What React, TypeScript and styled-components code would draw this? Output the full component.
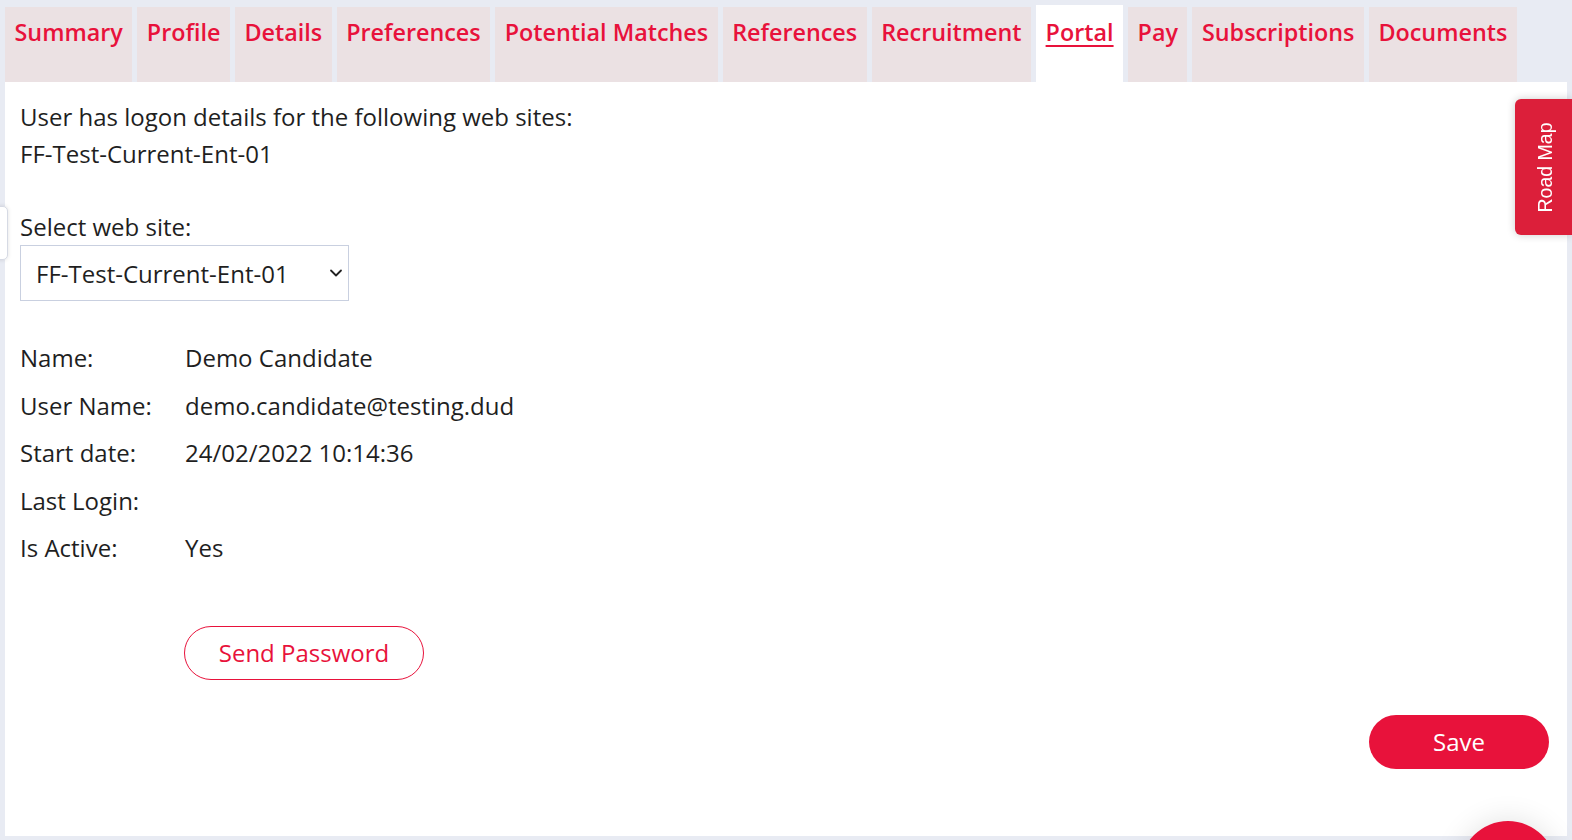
import React from "react";
import styled, { createGlobalStyle } from "styled-components";

const RED = "#e8123b";

const Global = createGlobalStyle`
  html, body { margin: 0; padding: 0; }
  body {
    background: #e8ebf3;
    font-family: "Open Sans", "Noto Sans", sans-serif;
    color: #1f1f1f;
    overflow: hidden;
  }
`;

const Page = styled.div`
  width: 1572px;
  height: 840px;
  box-sizing: border-box;
  padding: 5px 5px 4px 5px;
  display: flex;
  flex-direction: column;
`;

const TabBar = styled.nav`
  display: flex;
  align-items: flex-end;
  gap: 5px;
  height: 77px;
`;

const Tab = styled.a<{ $active?: boolean }>`
  display: block;
  box-sizing: border-box;
  height: ${(p) => (p.$active ? "77px" : "75px")};
  padding: ${(p) => (p.$active ? "12px 9.5px 0" : "10px 9.5px 0")};
  background: ${(p) => (p.$active ? "#ffffff" : "#ebe1e3")};
  color: ${RED};
  font-size: 23.35px;
  font-weight: 600;
  line-height: 30px;
  text-decoration: ${(p) => (p.$active ? "underline" : "none")};
  text-underline-offset: 4px;
  text-decoration-thickness: 2px;
  white-space: nowrap;
  cursor: pointer;
`;

const Panel = styled.main`
  flex: 1;
  background: #ffffff;
  padding: 16px 15px 0;
  font-size: 24px;
  line-height: 37px;
`;

const Line = styled.div``;

const FieldLabel = styled.div`
  margin-top: 36px;
  line-height: 37px;
`;

const SelectWrap = styled.div`
  position: relative;
  width: 329px;
  height: 56px;
`;

const Select = styled.select`
  appearance: none;
  width: 100%;
  height: 100%;
  box-sizing: border-box;
  border: 1px solid #c9d0e0;
  border-radius: 0;
  background: #fff;
  padding: 0 40px 0 15px;
  font-family: "Open Sans", "Noto Sans", sans-serif;
  font-size: 24px;
  color: #1f1f1f;
  outline: none;
`;

const Chevron = styled.svg`
  position: absolute;
  right: 5px;
  top: 21px;
  pointer-events: none;
`;

const DetailGrid = styled.dl`
  display: grid;
  grid-template-columns: 165px auto;
  grid-auto-rows: 47.5px;
  align-items: center;
  margin: 33px 0 0;
`;

const Term = styled.dt`
  margin: 0;
`;

const Def = styled.dd`
  margin: 0;
`;

const OutlineButton = styled.button`
  margin: 54px 0 0 164px;
  width: 240px;
  height: 54px;
  border: 1px solid ${RED};
  border-radius: 27px;
  background: #fff;
  color: ${RED};
  font-family: "Open Sans", "Noto Sans", sans-serif;
  font-size: 24px;
  cursor: pointer;
`;

const Footer = styled.div`
  display: flex;
  justify-content: flex-end;
  padding-right: 3px;
  margin-top: 35px;
`;

const SaveButton = styled.button`
  width: 180px;
  height: 54px;
  border: none;
  border-radius: 27px;
  background: ${RED};
  color: #fff;
  font-family: "Open Sans", "Noto Sans", sans-serif;
  font-size: 24px;
  cursor: pointer;
`;

const RoadMap = styled.div`
  position: fixed;
  top: 99px;
  right: 0;
  width: 57px;
  height: 136px;
  background: #dc1f3a;
  border-radius: 6px 0 0 6px;
  box-shadow: 0 0 8px rgba(0, 0, 0, 0.2);
  display: flex;
  align-items: center;
  justify-content: center;
`;

const RoadMapText = styled.span`
  display: block;
  transform: rotate(-90deg);
  color: #fff;
  font-family: "Liberation Sans", Arial, sans-serif;
  font-size: 19.5px;
  white-space: nowrap;
  margin-left: 4px;
`;

const SideHandle = styled.div`
  position: fixed;
  left: -6px;
  top: 206px;
  width: 12px;
  height: 52px;
  background: #fff;
  border: 1px solid #d6dae4;
  border-radius: 5px;
  box-shadow: 0 0 4px rgba(0, 0, 0, 0.12);
`;

const Fab = styled.div`
  position: fixed;
  left: 1460px;
  top: 821px;
  width: 96px;
  height: 96px;
  border-radius: 50%;
  background: ${RED};
  box-shadow: 0 0 30px rgba(0, 0, 0, 0.12);
`;

const tabs = [
  "Summary",
  "Profile",
  "Details",
  "Preferences",
  "Potential Matches",
  "References",
  "Recruitment",
  "Portal",
  "Pay",
  "Subscriptions",
  "Documents",
];

const details: [string, string][] = [
  ["Name:", "Demo Candidate"],
  ["User Name:", "demo.candidate@testing.dud"],
  ["Start date:", "24/02/2022 10:14:36"],
  ["Last Login:", ""],
  ["Is Active:", "Yes"],
];

export default function App() {
  return (
    <>
      <Global />
      <Page>
        <TabBar>
          {tabs.map((t) => (
            <Tab key={t} $active={t === "Portal"}>
              {t}
            </Tab>
          ))}
        </TabBar>
        <Panel>
          <Line>User has logon details for the following web sites:</Line>
          <Line>FF-Test-Current-Ent-01</Line>
          <FieldLabel>Select web site:</FieldLabel>
          <SelectWrap>
            <Select defaultValue="FF-Test-Current-Ent-01">
              <option>FF-Test-Current-Ent-01</option>
            </Select>
            <Chevron width="16" height="14" viewBox="0 0 16 14">
              <path d="M3 4.5 L8 9.5 L13 4.5" fill="none" stroke="#222" strokeWidth="1.8" strokeLinecap="round" strokeLinejoin="round" />
            </Chevron>
          </SelectWrap>
          <DetailGrid>
            {details.map(([k, v]) => (
              <React.Fragment key={k}>
                <Term>{k}</Term>
                <Def>{v}</Def>
              </React.Fragment>
            ))}
          </DetailGrid>
          <OutlineButton>Send Password</OutlineButton>
          <Footer>
            <SaveButton>Save</SaveButton>
          </Footer>
        </Panel>
      </Page>
      <SideHandle />
      <RoadMap>
        <RoadMapText>Road Map</RoadMapText>
      </RoadMap>
      <Fab />
    </>
  );
}
